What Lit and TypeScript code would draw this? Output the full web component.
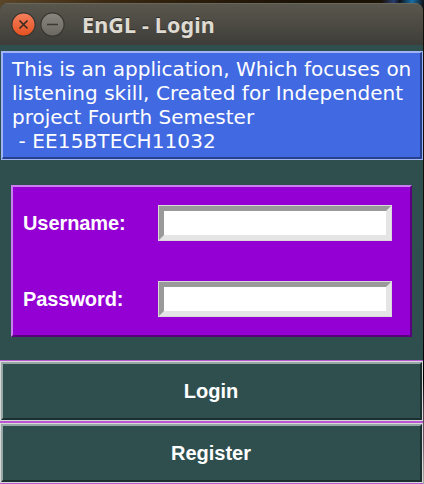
import { LitElement, html, css, svg } from "lit";
import { customElement } from "lit/decorators.js";

@customElement("app-root")
export class AppRoot extends LitElement {
  static styles = css`
    :host { display: block; }
    * { box-sizing: border-box; }
    .desktop {
      width: 424px; height: 484px; padding: 3px 1px 0 0; overflow: hidden;
      background:
        linear-gradient(100deg, transparent 376px, #273e70 388px, #101018 394px, #1570a8 406px, #121014 418px) 0 0 / 424px 9px no-repeat,
        linear-gradient(#141008 0 130px, #0c0a0e 320px, #000 370px, #54404e 402px, #6b5064 430px, #989494 460px, #aaa) 423px 9px / 1px 475px no-repeat,
        linear-gradient(90deg, #5a4528, #35240f 130px, #1b1206 300px, #1b1206);
    }
    .window { height: 481px; background: #2f4f4f; border-radius: 8px 8px 0 0; display: flex; flex-direction: column; overflow: hidden; }
    .titlebar {
      flex: none; height: 42px; display: flex; align-items: center; padding-left: 11px;
      background: linear-gradient(#5a574d, #3e3d39); box-shadow: inset 0 1px #68655b;
    }
    .controls { display: block; flex: none; }
    .title {
      margin: 1px 0 0 16px; font: bold 21.5px/42px "Noto Sans", sans-serif; color: #dfdbd2;
      letter-spacing: 0.15px; text-shadow: 0 -1px #2d2c28; white-space: pre;
    }
    .intro { margin: 6px 0 0 1px; height: 109px; border: 1px solid #a0b4f5; flex: none; }
    .intro-body {
      height: 107px; margin: 0; padding: 4px 0 0 9px; background: #4169e1; border: solid;
      border-width: 1px 2px 2px 1px; border-color: #a0b4f5 #27408b #27408b #a0b4f5;
      color: #fff; font: 20px/24px "DejaVu Sans", sans-serif; white-space: pre;
    }
    .line { display: block; }
    .line:nth-child(2) { letter-spacing: 0.05px; }
    .line:nth-child(4) { letter-spacing: 0.12px; }
    .form {
      flex: none; margin: 25px 11px 0; width: 401px; height: 152px; background: #9400d3;
      border: 2px solid; border-color: #c97ff0 #59007f #59007f #c97ff0;
      padding: 18px 18px 0 10px; display: flex; flex-direction: column; gap: 40px;
    }
    .field { display: flex; align-items: center; justify-content: space-between; height: 36px; color: #fff; font: bold 20px/24px "Liberation Sans", sans-serif; letter-spacing: -0.08px; }
    .frame { width: 234px; height: 36px; border: 1px solid #d9d9d9; flex: none; display: flex; }
    .entry { width: 100%; border: 5px solid; border-color: #999 #e5e5e5 #e5e5e5 #999; background: #fff; outline: none; border-radius: 0; padding: 0; }
    .actions { flex: none; margin-top: 23px; background: #ba55d3; padding: 1px 0; display: flex; flex-direction: column; gap: 2px; }
    .btn-frame { border: 1px solid #d9d9d9; display: flex; }
    .btn {
      width: 100%; height: 58px; border: 2px solid; border-color: #97a7a7 #1c2f2f #1c2f2f #97a7a7;
      background: #2f4f4f; color: #fff; border-radius: 0; padding: 0 1px 0 0; font: bold 20px/24px "Liberation Sans", sans-serif;
    }
  `;

  private intro = [
    "This is an application, Which focuses on",
    "listening skill, Created for Independent",
    "project Fourth Semester",
    " - EE15BTECH11032",
  ];

  private field(label: string, type: string) {
    return html`<label class="field"><span>${label}</span><span class="frame"><input class="entry" type=${type} /></span></label>`;
  }

  private button(label: string) {
    return html`<div class="btn-frame"><button class="btn">${label}</button></div>`;
  }

  render() {
    return html`
      <div class="desktop">
        <main class="window">
          <header class="titlebar">
            <svg class="controls" width="55" height="26" viewBox="0 0 55 26">
              <defs>
                <linearGradient id="close" x2="0" y2="1"><stop stop-color="#f4805d" /><stop offset="1" stop-color="#e5501f" /></linearGradient>
                <linearGradient id="min" x2="0" y2="1"><stop stop-color="#89867e" /><stop offset="1" stop-color="#6a6861" /></linearGradient>
              </defs>
              ${svg`
                <circle cx="12.5" cy="13.5" r="11.6" fill="url(#close)" stroke="#383631" stroke-width="1.2" />
                <path d="M8.5 9.5l8 8m0-8l-8 8" stroke="#3b2a22" stroke-width="1.7" fill="none" />
                <circle cx="41.5" cy="13.5" r="11.6" fill="url(#min)" stroke="#383631" stroke-width="1.2" />
                <path d="M36 13.5h11" stroke="#3a3934" stroke-width="1.5" />
              `}
            </svg>
            <h1 class="title">EnGL - Login</h1>
          </header>
          <section class="intro"><p class="intro-body">${this.intro.map((t) => html`<span class="line">${t}</span>`)}</p></section>
          <form class="form">${this.field("Username:", "text")}${this.field("Password:", "password")}</form>
          <div class="actions">${this.button("Login")}${this.button("Register")}</div>
        </main>
      </div>`;
  }
}
